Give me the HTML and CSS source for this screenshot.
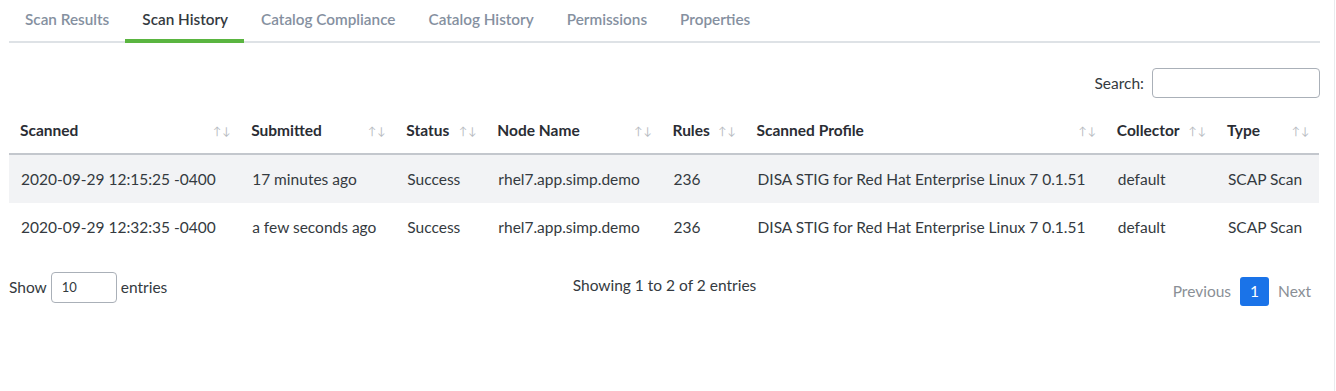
FILE: index.html
```
<!DOCTYPE html>
<html>
<head>
	<title>Scan History</title>
	<link rel="stylesheet" href="styles.css">
</head>
<body>
	<div class="page">
		<ul class="tabs">
			<li class="tab">Scan Results</li>
			<li class="tab active">Scan History</li>
			<li class="tab">Catalog Compliance</li>
			<li class="tab">Catalog History</li>
			<li class="tab">Permissions</li>
			<li class="tab">Properties</li>
		</ul>

		<div class="toolbar">
			<label class="search">Search: <input type="text"></label>
		</div>

		<table class="results">
			<colgroup>
				<col style="width:231px"><col style="width:155px"><col style="width:91px"><col style="width:175px">
				<col style="width:84px"><col style="width:360px"><col style="width:110px"><col style="width:103px">
			</colgroup>
			<thead>
				<tr>
					<th><div class="th">Scanned<span class="sort">↑↓</span></div></th>
					<th><div class="th">Submitted<span class="sort">↑↓</span></div></th>
					<th><div class="th">Status<span class="sort">↑↓</span></div></th>
					<th><div class="th">Node Name<span class="sort">↑↓</span></div></th>
					<th><div class="th">Rules<span class="sort">↑↓</span></div></th>
					<th><div class="th">Scanned Profile<span class="sort">↑↓</span></div></th>
					<th><div class="th">Collector<span class="sort">↑↓</span></div></th>
					<th><div class="th">Type<span class="sort">↑↓</span></div></th>
				</tr>
			</thead>
			<tbody>
				<tr class="odd">
					<td>2020-09-29 12:15:25 -0400</td>
					<td>17 minutes ago</td>
					<td>Success</td>
					<td>rhel7.app.simp.demo</td>
					<td>236</td>
					<td>DISA STIG for Red Hat Enterprise Linux 7 0.1.51</td>
					<td>default</td>
					<td>SCAP Scan</td>
				</tr>
				<tr>
					<td>2020-09-29 12:32:35 -0400</td>
					<td>a few seconds ago</td>
					<td>Success</td>
					<td>rhel7.app.simp.demo</td>
					<td>236</td>
					<td>DISA STIG for Red Hat Enterprise Linux 7 0.1.51</td>
					<td>default</td>
					<td>SCAP Scan</td>
				</tr>
			</tbody>
		</table>

		<div class="footer">
			<div class="length">Show <input type="text" value="10"> entries</div>
			<div class="info">Showing 1 to 2 of 2 entries</div>
			<div class="paging">
				<span class="pg disabled">Previous</span>
				<span class="pg current">1</span>
				<span class="pg disabled">Next</span>
			</div>
		</div>
	</div>
</body>
</html>
```

FILE: styles.css
```
body {
	margin: 0;
	background-color: #fff;
	font-family: Lato, "Noto Sans", sans-serif;
	font-size: 15.5px;
	color: #343a40;
}

.page {
	width: 1311px;
	padding: 0 14px 0 9px;
	border-right: 1px solid #e9ebee;
	min-height: 391px;
	box-sizing: content-box;
}

.tabs {
	list-style: none;
	margin: 0;
	padding: 0;
	display: flex;
	border-bottom: 2px solid #dee2e6;
}

.tab {
	padding: 10px 16px 10px 17px;
	font-size: 15.3px;
	font-weight: 600;
	color: #8590a0;
	border-bottom: 4px solid transparent;
	margin-bottom: -2px;
	line-height: 19px;
}

.tab:first-child {
	padding-left: 16px;
}

.tab.active {
	color: #343a40;
	border-bottom-color: #5ab540;
}

.toolbar {
	display: flex;
	justify-content: flex-end;
	padding-top: 25px;
}

.search {
	display: flex;
	align-items: center;
	gap: 8px;
	color: #343a40;
}

.search input {
	width: 168px;
	height: 30px;
	box-sizing: border-box;
	border: 1px solid #aab0b8;
	border-radius: 4px;
	margin: 0;
}

.results {
	width: 1310px;
	table-layout: fixed;
	border-collapse: collapse;
	margin-top: 7px;
}

.results th {
	text-align: left;
	font-weight: 700;
	color: #2a2d34;
	padding: 16px 9px 14px 11px;
	border-bottom: 2px solid #c3c7cd;
}

.th {
	display: flex;
	justify-content: space-between;
	align-items: center;
}

.sort {
	font-size: 11px;
	color: #b8bcc2;
	font-weight: 400;
	letter-spacing: 1px;
}

.results td {
	padding: 0 12px;
	height: 48px;
	white-space: nowrap;
}

.results tr.odd td {
	background-color: #f2f3f5;
}

.footer {
	display: flex;
	justify-content: space-between;
	align-items: center;
	padding-top: 17px;
}

.length {
	flex: 1;
	display: flex;
	align-items: center;
	gap: 4px;
}

.length input {
	width: 66px;
	height: 31px;
	box-sizing: border-box;
	border: 1px solid #aab0b8;
	border-radius: 4px;
	padding: 0 10px;
	font-family: inherit;
	font-size: 13px;
	color: #343a40;
	margin: 0;
}

.info {
	flex: 1;
	text-align: center;
	margin-top: -5px;
}

.paging {
	flex: 1;
	display: flex;
	justify-content: flex-end;
	align-items: center;
	margin-top: 9px;
}

.pg {
	padding: 5px 9px;
	line-height: 19px;
}

.pg.disabled {
	color: #8a8f96;
}

.pg.current {
	background-color: #1a73e8;
	color: #fff;
	border-radius: 3px;
	padding: 5px 10px;
	margin: 0;
}
```
